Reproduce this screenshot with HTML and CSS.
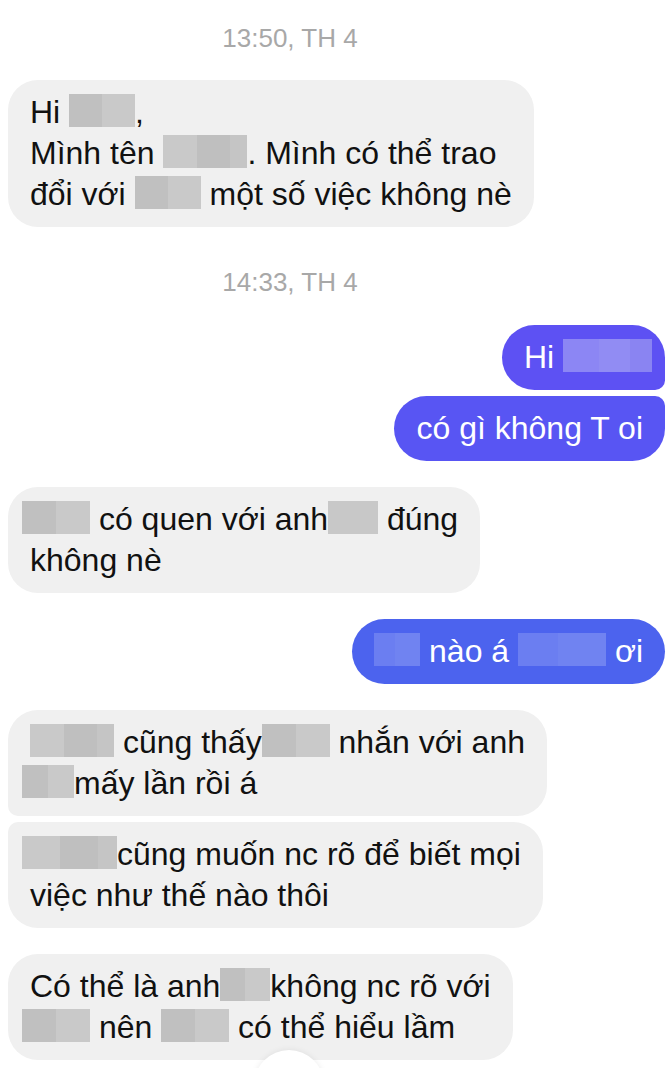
FILE: index.html
```html
<!DOCTYPE html>
<html>
  <head>
    <meta charset="utf-8">
    <title>Tin nhắn</title>
    <link rel="stylesheet" href="styles.css">
  </head>
  <body>
    <div class="chat">
      <div class="stamp first">13:50, TH 4</div>

      <div class="msg in">
        Hi <span class="mask w66"></span>,<br>
        Mình tên <span class="mask w84 tri"></span>. Mình có thể trao<br>
        đổi với <span class="mask w66"></span> một số việc không nè
      </div>

      <div class="stamp">14:33, TH 4</div>

      <div class="msg out top c1">
        Hi <span class="mask w89 light tail"></span>
      </div>
      <div class="msg out bottom c2">có gì không T oi</div>

      <div class="msg in gap">
        <span class="mask w68 lead"></span> có quen với anh<span class="mask w50 flat"></span> đúng<br>
        không nè
      </div>

      <div class="msg out gap c3">
        <span class="mask w46 blue"></span> nào á <span class="mask w88 blue"></span> ơi
      </div>

      <div class="msg in top gap">
        <span class="mask w84 tri"></span> cũng thấy<span class="mask w68"></span> nhắn với anh<br>
        <span class="mask w52 lead"></span>mấy lần rồi á
      </div>
      <div class="msg in bottom">
        <span class="mask w95 lead tri"></span>cũng muốn nc rõ để biết mọi<br>
        việc như thế nào thôi
      </div>

      <div class="msg in gap">
        Có thể là anh<span class="mask w50"></span>không nc rõ với<br>
        <span class="mask w68 lead"></span> nên <span class="mask w68"></span> có thể hiểu lầm
      </div>
    </div>

    <div class="scroll-down"></div>
  </body>
</html>
```

FILE: styles.css
```css
body {
  margin: 0;
  background-color: #fff;
  font-family: "Liberation Sans", Arial, sans-serif;
  position: relative;
  height: 1068px;
  overflow: hidden;
}
.chat {
  display: flex;
  flex-direction: column;
  padding: 23px 5px 0 8px;
}
.stamp {
  align-self: center;
  margin: 40px 93px 28px 0;
  font-size: 26px;
  line-height: 30px;
  color: #a8a8a8;
}
.stamp.first {
  margin-top: 0;
  margin-bottom: 27px;
}
.msg {
  font-size: 32px;
  line-height: 41px;
  padding: 12px 22px;
  border-radius: 30px;
  white-space: nowrap;
}
.msg.in {
  align-self: flex-start;
  background-color: #f0f0f0;
  color: #111;
}
.msg.out {
  align-self: flex-end;
  color: #fff;
  border-radius: 33px;
}
.msg.gap {
  margin-top: 26px;
}
.msg.bottom {
  margin-top: 6px;
}
.msg.in.top {
  border-bottom-left-radius: 10px;
}
.msg.in.bottom {
  border-top-left-radius: 10px;
}
.msg.out.top {
  border-bottom-right-radius: 10px;
}
.msg.out.bottom {
  border-top-right-radius: 10px;
}
.c1 {
  background-color: #5d51f3;
}
.c2 {
  background-color: #5855f3;
}
.c3 {
  background-color: #4c63ee;
}

/* pixelated name cover */
.mask {
  display: inline-block;
  height: 33px;
  vertical-align: -4px;
  background: linear-gradient(to right, #c0c0c0 0 50%, #c9c9c9 50% 100%);
}
.mask.tri {
  background: linear-gradient(to right, #c9c9c9 0 40%, #bfbfbf 40% 80%, #c5c5c5 80% 100%);
}
.mask.flat {
  background: #c8c8c8;
}
.mask.light {
  background: linear-gradient(to right, #8c86f4 0 40%, #918cf3 40% 75%, #8a84f2 75% 100%);
}
.mask.blue {
  background: linear-gradient(to right, #6b7ef1 0 45%, #7083f1 45% 100%);
}
.mask.lead {
  margin-left: -8px;
}
.mask.tail {
  margin-right: -9px;
}
.w46 { width: 46px; }
.w50 { width: 50px; }
.w52 { width: 52px; }
.w66 { width: 66px; }
.w68 { width: 68px; }
.w84 { width: 84px; }
.w88 { width: 88px; }
.w89 { width: 89px; }
.w95 { width: 95px; }

.scroll-down {
  position: absolute;
  left: 254px;
  top: 1050px;
  width: 70px;
  height: 70px;
  border-radius: 50%;
  background-color: #fff;
  box-shadow: 0 0 6px rgba(0, 0, 0, 0.08);
}
```
